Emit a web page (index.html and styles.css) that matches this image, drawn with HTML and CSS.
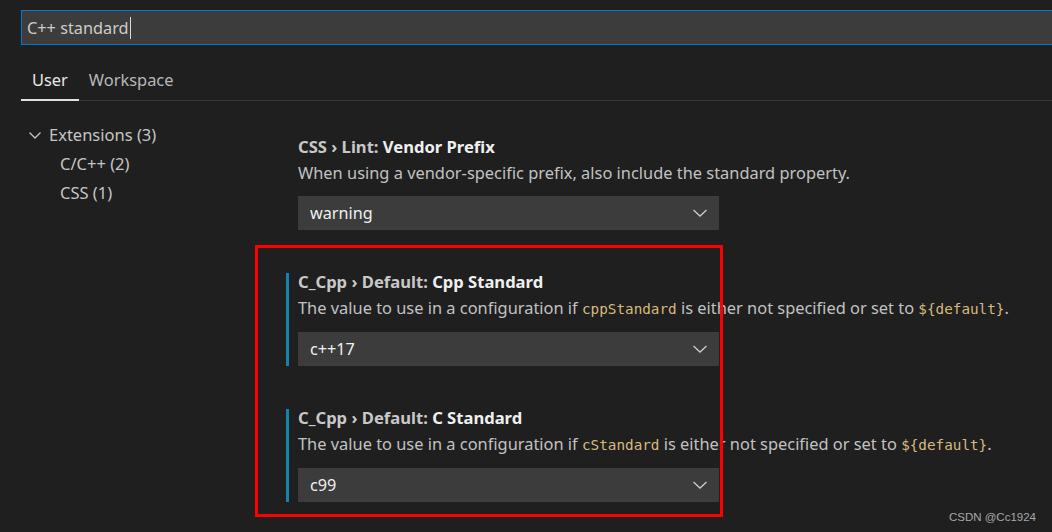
FILE: index.html
```html
<!DOCTYPE html>
<html>
<head>
<meta charset="utf-8">
<link rel="stylesheet" href="styles.css">
</head>
<body>
<div class="page">
  <div class="search-row">
    <div class="search-box"><span class="search-text">C++ standard</span><span class="caret"></span></div>
  </div>
  <div class="tabs">
    <div class="tab active">User</div>
    <div class="tab">Workspace</div>
  </div>
  <div class="main">
    <div class="tree">
      <div class="tree-row top">
        <svg class="chev" width="14" height="10" viewBox="0 0 14 10"><path d="M1.5 2.5 L7 8 L12.5 2.5" fill="none" stroke="#c5c5c5" stroke-width="1.3"/></svg>
        <span>Extensions (3)</span>
      </div>
      <div class="tree-row child">C/C++ (2)</div>
      <div class="tree-row child">CSS (1)</div>
    </div>
    <div class="settings">
      <div class="setting">
        <div class="title"><span class="cat">CSS › Lint: </span><span class="key">Vendor Prefix</span></div>
        <div class="desc">When using a vendor-specific prefix, also include the standard property.</div>
        <div class="select"><span>warning</span><svg class="dd" width="16" height="10" viewBox="0 0 16 10"><path d="M1.5 2 L8 8 L14.5 2" fill="none" stroke="#cccccc" stroke-width="1.3"/></svg></div>
      </div>
      <div class="setting focused">
        <div class="title"><span class="cat">C_Cpp › Default: </span><span class="key">Cpp Standard</span></div>
        <div class="desc">The value to use in a configuration if <code>cppStandard</code> is either not specified or set to <code>${default}</code>.</div>
        <div class="select"><span>c++17</span><svg class="dd" width="16" height="10" viewBox="0 0 16 10"><path d="M1.5 2 L8 8 L14.5 2" fill="none" stroke="#cccccc" stroke-width="1.3"/></svg></div>
      </div>
      <div class="setting focused">
        <div class="title"><span class="cat">C_Cpp › Default: </span><span class="key">C Standard</span></div>
        <div class="desc">The value to use in a configuration if <code>cStandard</code> is either not specified or set to <code>${default}</code>.</div>
        <div class="select"><span>c99</span><svg class="dd" width="16" height="10" viewBox="0 0 16 10"><path d="M1.5 2 L8 8 L14.5 2" fill="none" stroke="#cccccc" stroke-width="1.3"/></svg></div>
      </div>
    </div>
  </div>
  <div class="annot"></div>
  <div class="watermark">CSDN @Cc1924</div>
</div>
</body>
</html>
```

FILE: styles.css
```css
html, body {
  margin: 0;
  padding: 0;
  background: #1f1f1f;
}
.page {
  position: relative;
  width: 1052px;
  height: 532px;
  overflow: hidden;
  font-family: "Noto Sans", "Open Sans", sans-serif;
  color: #cccccc;
}
.search-row {
  padding: 10px 0 0 21px;
}
.search-box {
  height: 33px;
  margin-right: -10px;
  background: #3c3c3c;
  border: 1px solid #0078d4;
  display: flex;
  align-items: center;
  padding-left: 5px;
  font-size: 16.3px;
  color: #cccccc;
}
.caret {
  display: inline-block;
  width: 1px;
  height: 22px;
  background: #dddddd;
  margin-left: 1px;
}
.tabs {
  display: flex;
  margin: 0 0 0 21px;
  height: 55px;
  border-bottom: 1px solid #3a3a3a;
  align-items: stretch;
}
.tab {
  font-size: 16.4px;
  padding: 0 10px;
  display: flex;
  align-items: center;
  padding-top: 14px;
  color: #b8b8b8;
  border-bottom: 2px solid transparent;
  margin-bottom: -1px;
}
.tab.active {
  padding: 14px 11px 0 11px;
  color: #e8e8e8;
  border-bottom-color: #e0e0e0;
}
.main {
  display: flex;
}
.tree {
  width: 286px;
  padding: 19px 0 0 28px;
  box-sizing: border-box;
  font-size: 16.5px;
  color: #c5c5c5;
}
.tree-row {
  height: 29px;
  display: flex;
  align-items: center;
}
.tree-row.top .chev {
  margin-right: 7px;
}
.tree-row.child {
  padding-left: 32px;
}
.settings {
  flex: 1;
  padding-top: 37px;
}
.setting {
  border-left: 3px solid transparent;
  padding-left: 9px;
  margin-bottom: 43px;
  width: 421px;
}
.setting.focused {
  border-left-color: #1384ab;
}
.title {
  font-size: 16.6px;
  font-weight: 700;
  line-height: 18px;
  white-space: nowrap;
}
.title .cat {
  color: #c8c8c8;
}
.title .key {
  color: #f0f0f0;
}
.desc {
  margin-top: 7px;
  font-size: 16.4px;
  line-height: 20px;
  white-space: nowrap;
  color: #c2c2c2;
}
code {
  font-family: "DejaVu Sans Mono", monospace;
  font-size: 14.3px;
  color: #d7ba7d;
}
.select {
  margin-top: 13px;
  height: 34px;
  background: #3c3c3c;
  display: flex;
  align-items: center;
  justify-content: space-between;
  padding: 0 11px 0 12px;
  font-size: 16.2px;
  color: #f0f0f0;
}
.annot {
  position: absolute;
  left: 255px;
  top: 245px;
  width: 462px;
  height: 266px;
  border: 3px solid #ff0000;
}
.watermark {
  position: absolute;
  right: 16px;
  bottom: 9px;
  font-family: "Liberation Sans", sans-serif;
  font-size: 11.5px;
  color: #a8a8a8;
}
```
